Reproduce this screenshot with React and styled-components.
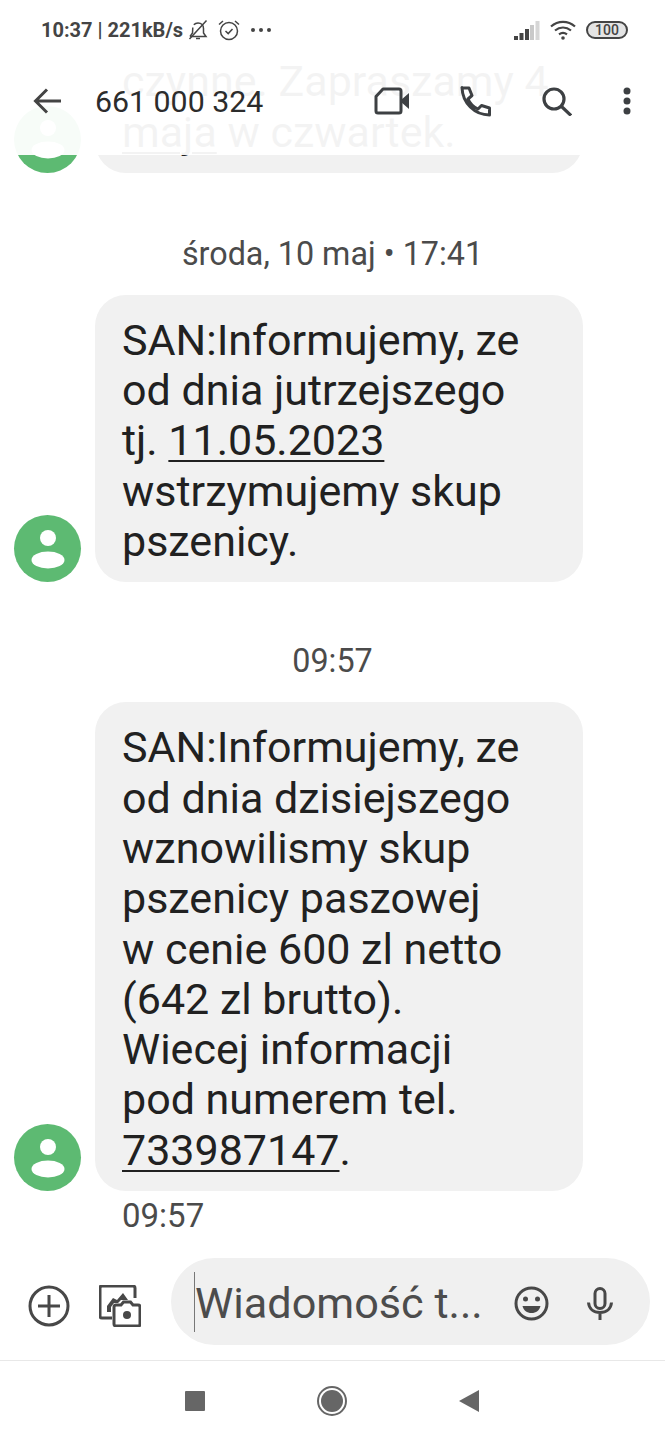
import styled, { createGlobalStyle } from "styled-components";

const GlobalStyle = createGlobalStyle`
  html, body {
    margin: 0;
    padding: 0;
    background: #fff;
  }
  * {
    box-sizing: border-box;
  }
`;

const Screen = styled.div`
  position: relative;
  width: 665px;
  height: 1440px;
  overflow: hidden;
  display: flex;
  flex-direction: column;
  font-family: Roboto, "Liberation Sans", sans-serif;
  color: #212121;
  background: #fff;
`;

const TopBars = styled.div`
  position: absolute;
  top: 0;
  left: 0;
  right: 0;
  height: 155px;
  background: rgba(255, 255, 255, 0.95);
`;

const StatusBar = styled.div`
  height: 60px;
  padding: 0 37px 0 41px;
  display: flex;
  align-items: center;
  color: #444;
`;

const StatusText = styled.span`
  font-size: 20px;
  font-weight: 700;
  white-space: nowrap;
`;

const StatusLeft = styled.div`
  display: flex;
  align-items: center;
  gap: 5px;
  flex: 1;
`;

const StatusIcons = styled.div`
  display: flex;
  align-items: center;
  gap: 10px;
`;

const StatusRight = styled.div`
  display: flex;
  align-items: center;
  gap: 10px;
`;

const Battery = styled.span`
  width: 42px;
  height: 18px;
  border: 2px solid #444;
  border-radius: 9px;
  display: flex;
  align-items: center;
  justify-content: center;
  font-size: 14px;
  font-weight: 500;
  line-height: 1;
  background: #e4e4e4;
`;

const Toolbar = styled.div`
  height: 82px;
  padding: 0 34px 0 33px;
  display: flex;
  align-items: center;
`;

const ContactName = styled.div`
  margin-left: 34px;
  flex: 1;
  font-size: 30.3px;
  color: #2c2c2c;
`;

const ToolbarIcons = styled.div`
  display: flex;
  align-items: center;
  gap: 51px;
`;

const Thread = styled.div`
  flex: 1;
  min-height: 0;
  display: flex;
  flex-direction: column;
  justify-content: flex-end;
  overflow: hidden;
`;

const Stamp = styled.div`
  margin: ${(props) => props.$top || 59}px 0 21px;
  text-align: center;
  font-size: 32.3px;
  line-height: 40px;
  color: #4b4b4b;
`;

const MessageRow = styled.div`
  display: flex;
  align-items: flex-end;
  padding-left: 14px;
  gap: 14px;
  flex-shrink: 0;
`;

const Avatar = styled.div`
  width: 67px;
  height: 67px;
  flex-shrink: 0;
  border-radius: 50%;
  background: #5dba72;
  display: flex;
  align-items: center;
  justify-content: center;
`;

const Bubble = styled.div`
  width: 488px;
  padding: 20px 28px 16px 27px;
  border-radius: 31px;
  background: #f1f1f1;
  font-size: 43px;
  line-height: 50.3px;
  color: #212121;
`;

const Line = styled.div`
  white-space: nowrap;
`;

const Linked = styled.span`
  text-decoration: underline;
  text-decoration-thickness: 2px;
  text-underline-offset: 5px;
`;

const SentTime = styled.div`
  margin: 6px 0 23px 122px;
  font-size: 33px;
  line-height: 38px;
  color: #4b4b4b;
`;

const Composer = styled.div`
  height: 102px;
  padding: 0 15px 15px 28px;
  display: flex;
  align-items: center;
  flex-shrink: 0;
`;

const ComposerIcons = styled.div`
  display: flex;
  align-items: center;
  gap: 29px;
  margin-right: 30px;
  padding-top: 8px;
`;

const InputPill = styled.div`
  position: relative;
  flex: 1;
  height: 87px;
  border-radius: 44px;
  background: #f0f0f0;
  display: flex;
  align-items: center;
  padding: 0 37px 0 24px;
`;

const Cursor = styled.span`
  position: absolute;
  left: 23px;
  top: 14px;
  width: 1px;
  height: 60px;
  background: #777;
`;

const Placeholder = styled.div`
  flex: 1;
  padding-top: 3px;
  font-size: 43.2px;
  color: #4c4c4c;
  white-space: nowrap;
`;

const PillIcons = styled.div`
  display: flex;
  align-items: center;
  gap: 38px;
  padding-top: 4px;
`;

const NavBar = styled.div`
  height: 80px;
  flex-shrink: 0;
  border-top: 1px solid #e8e8e8;
  padding: 0 186px 0 185px;
  display: flex;
  align-items: center;
  justify-content: space-between;
`;

const NavSquare = styled.div`
  width: 20px;
  height: 20px;
  border-radius: 1px;
  background: #666;
`;

const NavHome = styled.div`
  width: 30px;
  height: 30px;
  border-radius: 50%;
  border: 2px solid #666;
  padding: 2px;
  background: #666;
  background-clip: content-box;
`;

const NavBack = styled.div`
  width: 0;
  height: 0;
  border-top: 11px solid transparent;
  border-bottom: 11px solid transparent;
  border-right: 20px solid #666;
`;

const Person = () => (
  <svg width="38" height="40" viewBox="0 0 38 40">
    <circle cx="19" cy="9" r="8" fill="#fff" />
    <ellipse cx="19" cy="31" rx="16.5" ry="8.5" fill="#fff" />
  </svg>
);

const BellOff = () => (
  <svg width="20" height="22" viewBox="0 0 20 22" fill="none" stroke="#444" strokeWidth="1.5">
    <path d="M2 17.5h16l-2.5-3.5V9.5c0-3-2-5.500-5.500-5.500-1.800 0-3.200.7-4.200 1.800M4.800 8.500 4.500 14 2 17.500" />
    <path d="M8 19.500h4M1.500 20 18.500 1.500" />
  </svg>
);

const AlarmClock = () => (
  <svg width="22" height="22" viewBox="0 0 22 22" fill="none" stroke="#444" strokeWidth="1.5">
    <circle cx="11" cy="12" r="8.500" />
    <path d="M1 5.500 5 2M21 5.500 17 2" />
    <path d="m7.500 12 2.700 2.600 4.300-4.600" />
  </svg>
);

const MoreDots = () => (
  <svg width="22" height="6" viewBox="0 0 22 6" fill="#444">
    <circle cx="3" cy="3" r="2" />
    <circle cx="11" cy="3" r="2" />
    <circle cx="19" cy="3" r="2" />
  </svg>
);

const Signal = () => (
  <svg width="26" height="19" viewBox="0 0 26 19">
    <rect x="0" y="15" width="4" height="4" fill="#444" />
    <rect x="5.500" y="12" width="4" height="7" fill="#444" />
    <rect x="11" y="8" width="4" height="11" fill="#444" />
    <rect x="16" y="4" width="4" height="15" fill="#c9c9c9" />
    <rect x="21.500" y="0" width="4" height="19" fill="#d6d6d6" />
  </svg>
);

const Wifi = () => (
  <svg width="26" height="20" viewBox="0 0 26 20" fill="none" stroke="#444" strokeWidth="2.200">
    <path d="M1 6.500c7-6.300 17-6.300 24 0" />
    <path d="M5 10.500c4.800-4 11.200-4 16 0" />
    <path d="M9 14.300c2.500-1.800 5.500-1.800 8 0" />
    <circle cx="13" cy="18" r="1.800" fill="#444" stroke="none" />
  </svg>
);

const BackArrow = () => (
  <svg width="28" height="26" viewBox="0 0 28 26" fill="none" stroke="#444" strokeWidth="3">
    <path d="M28 13H3M14 1.500 2.500 13 14 24.500" />
  </svg>
);

const VideoIcon = () => (
  <svg width="35" height="28" viewBox="0 0 35 28" fill="none">
    <path d="M9 2h16a2 2 0 0 1 2 2v20a2 2 0 0 1-2 2H4a2 2 0 0 1-2-2V9.500Z" stroke="#3d4043" strokeWidth="3" strokeLinejoin="round" />
    <path d="M27 13 35 6v16l-8-7Z" fill="#3d4043" />
  </svg>
);

const PhoneIcon = () => (
  <svg width="31" height="31" viewBox="0 0 31 31" fill="none" stroke="#3d4043" strokeWidth="3" strokeLinejoin="round">
    <path d="M2 2h7l3 7.500-4 3.500c2 4.500 5.500 8 10 10l3.500-3.500 8 2.500v7c-15 0-27-12-27.500-27.500Z" />
  </svg>
);

const SearchIcon = () => (
  <svg width="30" height="29" viewBox="0 0 30 29" fill="none" stroke="#3d4043" strokeWidth="3.200">
    <circle cx="12" cy="12" r="10" />
    <path d="m19 19 10 9.500" />
  </svg>
);

const MenuDots = () => (
  <svg width="8" height="28" viewBox="0 0 8 28" fill="#3d4043">
    <circle cx="4" cy="4" r="3.500" />
    <circle cx="4" cy="14" r="3.500" />
    <circle cx="4" cy="24" r="3.500" />
  </svg>
);

const PlusCircle = () => (
  <svg width="42" height="42" viewBox="0 0 42 42" fill="none" stroke="#484848" strokeWidth="3">
    <circle cx="21" cy="21" r="19" />
    <path d="M21 10v22M10 21h22" />
  </svg>
);

const GalleryCamera = () => (
  <svg width="42" height="42" viewBox="0 0 42 42" fill="none">
    <path d="M13 33H3a2 2 0 0 1-2-2V3a2 2 0 0 1 2-2h31a2 2 0 0 1 2 2v10" stroke="#484848" strokeWidth="3" />
    <path d="M8 27v-6l6-8 4 2 6-7 5 7h-7l-3 3h-4l-3 4v5Z" fill="#484848" />
    <path d="M17 41a2 2 0 0 1-2-2V22a2 2 0 0 1 2-2h5l2.500-3h7l2.500 3h5a2 2 0 0 1 2 2v17a2 2 0 0 1-2 2Z" stroke="#484848" strokeWidth="3" fill="#fff" />
    <circle cx="28" cy="30" r="4" fill="#484848" />
  </svg>
);

const SmileIcon = () => (
  <svg width="35" height="35" viewBox="0 0 35 35" fill="none">
    <circle cx="17.500" cy="17.500" r="15.500" stroke="#484848" strokeWidth="3" />
    <circle cx="11.500" cy="13" r="2.500" fill="#484848" />
    <circle cx="23.500" cy="13" r="2.500" fill="#484848" />
    <path d="M8.500 20h18c-1 4.500-4.500 7-9 7s-8-2.500-9-7Z" fill="#484848" />
  </svg>
);

const MicIcon = () => (
  <svg width="26" height="33" viewBox="0 0 26 33" fill="none" stroke="#484848" strokeWidth="3">
    <rect x="8" y="1.500" width="10" height="20" rx="5" />
    <path d="M1.500 15.500c.5 6.500 5 10 11.500 10s11-3.500 11.500-10M13 25v8" />
  </svg>
);

const App = () => {
  return (
    <Screen>
      <GlobalStyle />
      <Thread>
        <MessageRow>
          <Avatar>
            <Person />
          </Avatar>
          <Bubble>
            <Line>czynne. Zapraszamy 4</Line>
            <Line>
              <Linked>maja</Linked> w czwartek.
            </Line>
          </Bubble>
        </MessageRow>
        <Stamp $top={61}>środa, 10 maj • 17:41</Stamp>
        <MessageRow>
          <Avatar>
            <Person />
          </Avatar>
          <Bubble>
            <Line>SAN:Informujemy, ze</Line>
            <Line>od dnia jutrzejszego</Line>
            <Line>
              tj. <Linked>11.05.2023</Linked>
            </Line>
            <Line>wstrzymujemy skup</Line>
            <Line>pszenicy.</Line>
          </Bubble>
        </MessageRow>
        <Stamp>09:57</Stamp>
        <MessageRow>
          <Avatar>
            <Person />
          </Avatar>
          <Bubble>
            <Line>SAN:Informujemy, ze</Line>
            <Line>od dnia dzisiejszego</Line>
            <Line>wznowilismy skup</Line>
            <Line>pszenicy paszowej</Line>
            <Line>w cenie 600 zl netto</Line>
            <Line>(642 zl brutto).</Line>
            <Line>Wiecej informacji</Line>
            <Line>pod numerem tel.</Line>
            <Line>
              <Linked>733987147</Linked>.
            </Line>
          </Bubble>
        </MessageRow>
        <SentTime>09:57</SentTime>
      </Thread>

      <Composer>
        <ComposerIcons>
          <PlusCircle />
          <GalleryCamera />
        </ComposerIcons>
        <InputPill>
          <Cursor />
          <Placeholder>Wiadomość t...</Placeholder>
          <PillIcons>
            <SmileIcon />
            <MicIcon />
          </PillIcons>
        </InputPill>
      </Composer>

      <NavBar>
        <NavSquare />
        <NavHome />
        <NavBack />
      </NavBar>

      <TopBars>
        <StatusBar>
          <StatusLeft>
            <StatusText>10:37 | 221kB/s</StatusText>
            <StatusIcons>
              <BellOff />
              <AlarmClock />
              <MoreDots />
            </StatusIcons>
          </StatusLeft>
          <StatusRight>
            <Signal />
            <Wifi />
            <Battery>100</Battery>
          </StatusRight>
        </StatusBar>
        <Toolbar>
          <BackArrow />
          <ContactName>661 000 324</ContactName>
          <ToolbarIcons>
            <VideoIcon />
            <PhoneIcon />
            <SearchIcon />
            <MenuDots />
          </ToolbarIcons>
        </Toolbar>
      </TopBars>
    </Screen>
  );
};

export default App;
